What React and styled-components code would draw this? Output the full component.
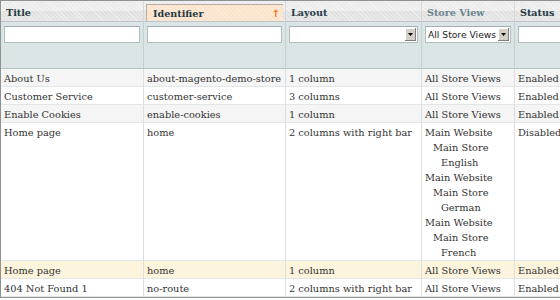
import React from "react";
import styled, { createGlobalStyle } from "styled-components";

const Global = createGlobalStyle`
  html, body { margin: 0; padding: 0; background: #fff; }
  body { width: 560px; height: 300px; overflow: hidden; }
  #root { width: 560px; overflow: hidden; }
`;

const Grid = styled.table`
  border-collapse: separate;
  border-spacing: 0;
  table-layout: fixed;
  width: 605px;
  border: 1px solid #8d9293;
  border-right: none;
  font-family: "DejaVu Serif", serif;
  font-size: 9.8px;
  color: #333;
`;

const HeadCell = styled.th`
  height: 20px;
  padding: 0;
  text-align: left;
  border-right: 1px solid #d6d9d9;
  border-bottom: 1px solid #bcc6c8;
  background:
    repeating-linear-gradient(45deg, rgba(255,255,255,0.35) 0 1px, transparent 1px 3px),
    linear-gradient(#ececec 0, #ededed 50%, #e1e1e1 52%, #e4e4e4 100%);
  vertical-align: bottom;
`;

const HeadLabel = styled.span`
  display: flex;
  align-items: center;
  justify-content: space-between;
  height: 17px;
  margin: 3px 2px 0 ${(p) => (p.$sorted ? 2 : 4)}px;
  padding: 0 3px 0 ${(p) => (p.$sorted ? 6 : 1)}px;
  font-weight: bold;
  font-size: 9.6px;
  color: ${(p) => (p.$muted ? "#6c858d" : "#253a44")};
  ${(p) =>
    p.$sorted &&
    `
    background: repeating-linear-gradient(45deg, rgba(255,255,255,0.3) 0 1px, transparent 1px 3px), #fbe3cc;
    border-top: 1px solid #b9ada2;
    border-left: 1px solid #b9ada2;
    height: 16px;
  `}
`;

const SortArrow = styled.span`
  color: #ee7a1c;
  font-weight: bold;
  font-size: 10px;
  font-family: "DejaVu Sans", sans-serif;
`;

const FilterCell = styled.td`
  height: 42px;
  padding: 4px 3px 0 3px;
  vertical-align: top;
  border-right: 1px solid #c3cfd1;
  border-bottom: 1px solid #b6c2c4;
  background:
    repeating-linear-gradient(90deg, rgba(255,255,255,0.12) 0 1px, transparent 1px 2px),
    #d7e3e4;
`;

const TextInput = styled.div`
  height: 15px;
  border: 1px solid #b3bdbf;
  border-top-color: #a4aeb0;
  background: #fff;
`;

const SelectBox = styled.div`
  display: flex;
  align-items: center;
  height: 15px;
  border: 1px solid #b3bdbf;
  border-top-color: #a4aeb0;
  background: #fff;
  font-family: "DejaVu Sans", sans-serif;
  font-size: 9.2px;
  color: #222;
`;

const SelectText = styled.span`
  flex: 1;
  padding-left: 2px;
  white-space: nowrap;
  overflow: hidden;
`;

const SelectButton = styled.span`
  flex: none;
  width: 11px;
  height: 13px;
  margin: 1px;
  background: #d4d0c8;
  border-right: 1px solid #808080;
  border-bottom: 1px solid #808080;
  box-shadow: inset 1px 1px 0 #fff;
  display: flex;
  align-items: center;
  justify-content: center;
  box-sizing: border-box;
`;

const Row = styled.tr`
  background: ${(p) => (p.$tone === "hl" ? "#fcf4dc" : p.$tone === "even" ? "#f5f5f5" : "#ffffff")};
`;

const Cell = styled.td`
  padding: 2px 2px 0 3px;
  line-height: 15px;
  height: 15px;
  vertical-align: top;
  white-space: nowrap;
  overflow: hidden;
  border-right: 1px solid #dadfe0;
  border-bottom: 1px solid #e3e6e6;
`;

const StoreLine = styled.div`
  line-height: 15px;
  padding-left: ${(p) => p.$indent * 8}px;
`;

const columns = [
  { key: "title", label: "Title", width: 143 },
  { key: "id", label: "Identifier", width: 142, sorted: true },
  { key: "layout", label: "Layout", width: 136 },
  { key: "store", label: "Store View", width: 93, muted: true },
  { key: "status", label: "Status", width: 91 },
];

const allStores = [["All Store Views", 0]];
const multiStores = [
  ["Main Website", 0],
  ["Main Store", 1],
  ["English", 2],
  ["Main Website", 0],
  ["Main Store", 1],
  ["German", 2],
  ["Main Website", 0],
  ["Main Store", 1],
  ["French", 2],
];

const rows = [
  { title: "About Us", id: "about-magento-demo-store", layout: "1 column", store: allStores, status: "Enabled", tone: "even" },
  { title: "Customer Service", id: "customer-service", layout: "3 columns", store: allStores, status: "Enabled", tone: "odd" },
  { title: "Enable Cookies", id: "enable-cookies", layout: "1 column", store: allStores, status: "Enabled", tone: "even" },
  { title: "Home page", id: "home", layout: "2 columns with right bar", store: multiStores, status: "Disabled", tone: "odd" },
  { title: "Home page", id: "home", layout: "1 column", store: allStores, status: "Enabled", tone: "hl" },
  { title: "404 Not Found 1", id: "no-route", layout: "2 columns with right bar", store: allStores, status: "Enabled", tone: "odd" },
];

const Arrow = () => (
  <svg width="5" height="3" viewBox="0 0 5 3">
    <path d="M0 0H5L2.5 3Z" fill="#000" />
  </svg>
);

export default function App() {
  return (
    <>
      <Global />
      <Grid>
        <colgroup>
          {columns.map((c) => (
            <col key={c.key} style={{ width: c.width }} />
          ))}
        </colgroup>
        <thead>
          <tr>
            {columns.map((c) => (
              <HeadCell key={c.key}>
                <HeadLabel $sorted={c.sorted} $muted={c.muted}>
                  {c.label}
                  {c.sorted && <SortArrow>↑</SortArrow>}
                </HeadLabel>
              </HeadCell>
            ))}
          </tr>
          <tr>
            <FilterCell><TextInput /></FilterCell>
            <FilterCell><TextInput /></FilterCell>
            <FilterCell>
              <SelectBox>
                <SelectText />
                <SelectButton><Arrow /></SelectButton>
              </SelectBox>
            </FilterCell>
            <FilterCell>
              <SelectBox>
                <SelectText>All Store Views</SelectText>
                <SelectButton><Arrow /></SelectButton>
              </SelectBox>
            </FilterCell>
            <FilterCell><TextInput /></FilterCell>
          </tr>
        </thead>
        <tbody>
          {rows.map((r, i) => (
            <Row key={i} $tone={r.tone}>
              <Cell>{r.title}</Cell>
              <Cell>{r.id}</Cell>
              <Cell>{r.layout}</Cell>
              <Cell>
                {r.store.map(([name, indent], j) => (
                  <StoreLine key={j} $indent={indent}>{name}</StoreLine>
                ))}
              </Cell>
              <Cell>{r.status}</Cell>
            </Row>
          ))}
        </tbody>
      </Grid>
    </>
  );
}
